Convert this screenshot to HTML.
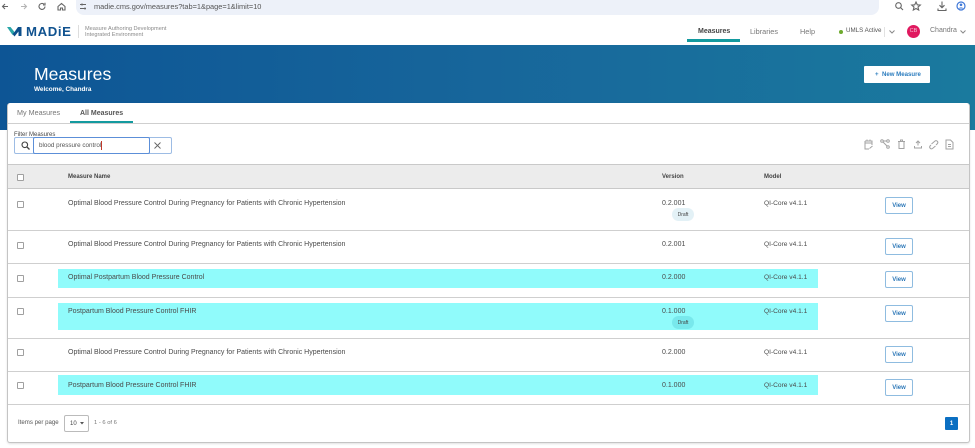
<!DOCTYPE html>
<html><head><meta charset="utf-8">
<style>
html,body{margin:0;padding:0;width:975px;height:448px;overflow:hidden;background:#fff;font-family:"Liberation Sans",sans-serif;color:#444}
#w{left:0;top:0;width:975px;height:448px;filter:blur(.3px);overflow:hidden;background:#fff}
div,span,svg{position:absolute;box-sizing:border-box}
.t{white-space:nowrap;line-height:10px}
.line{left:8px;width:961px;height:1.500px;background:#cfcfcf}
.hl{left:58px;width:760px;background:#90fbfb}
.cb{left:17px;width:7px;height:7px;border:1px solid #a0a0a0;border-radius:1px;background:#fff}
.name{left:68px;font-size:7px;color:#4a4a4a}
.ver{left:662px;font-size:7px;color:#4a4a4a}
.mod{left:764px;font-size:6.600px;color:#4a4a4a}
.view{left:885px;width:28px;height:17px;border:1px solid #8fbce0;border-radius:2px;background:#fff;color:#2d78b8;font-size:6px;font-weight:bold;text-align:center;line-height:17px}
.draft{left:672px;width:22px;height:13px;border-radius:7px;font-size:5px;color:#444;text-align:center;line-height:14px}
.ic{stroke:#a2a2a2;fill:none;stroke-width:1}
.br{stroke:#666;fill:none;stroke-width:1.100}
</style></head><body><div id="w">

<!-- browser bar -->
<div style="left:76px;top:0;width:803px;height:15px;background:#edf1f9;border-radius:0 0 8px 8px"></div>
<svg style="left:0;top:0" width="90" height="15" viewBox="0 0 90 15">
<path class="br" d="M8 6.500H2.500M5 4L2.500 6.500L5 9"/>
<path d="M21 6.500H26.500M24 4L26.500 6.500L24 9" stroke="#b5b5b5" fill="none" stroke-width="1.100"/>
<path class="br" d="M45 6.500A3 3 0 1 1 44 4.200M45 2.800V5H43"/>
<path class="br" d="M58 6.500L61.500 3.500L65 6.500V10H62.500V8H60.500V10H58Z"/>
<path class="br" d="M80 4.500H86M80 8.500H86"/>
<circle cx="82" cy="4.500" r="1" fill="#666"/><circle cx="85" cy="8.500" r="1" fill="#666"/>
</svg>
<div class="t" style="left:94px;top:2px;font-size:7.400px;color:#555">madie.cms.gov/measures?tab=1&amp;page=1&amp;limit=10</div>
<svg style="left:890px;top:0" width="85" height="15" viewBox="0 0 85 15">
<circle cx="8.500" cy="5.500" r="2.800" class="br"/><path class="br" d="M10.500 7.500L13 10"/>
<path class="br" d="M26 2L27.300 4.800L30.300 5.100L28 7.100L28.700 10L26 8.500L23.300 10L24 7.100L21.700 5.100L24.700 4.800Z"/>
<path class="br" d="M52 1.500V7.500M49.500 5.200L52 7.700L54.500 5.200M48 8.500V10.500H56V8.500"/>
<circle cx="71" cy="6" r="4" fill="#fff" stroke="#3f78d8" stroke-width="1.200"/><circle cx="71" cy="4.800" r="1.300" fill="#3f78d8"/><path d="M68.500 8.500A3 2.500 0 0 1 73.500 8.500" fill="#3f78d8"/>
</svg>

<!-- app header -->
<svg style="left:7px;top:27px" width="15" height="10" viewBox="0 0 15 10">
<path d="M0 0H3.500L7.500 5L5.500 8Z" fill="#2aa6a8"/><path d="M7.500 5L11 0H14.500V9H11.500V4.500L7.500 9.500L5.500 7Z" fill="#0d4f8b"/>
</svg>
<div class="t" style="left:26px;top:26px;font-size:13.200px;line-height:12px;font-weight:bold;color:#10528f;letter-spacing:.6px">MADiE</div>
<div style="left:78px;top:25px;width:1px;height:13px;background:#ddd"></div>
<div class="t" style="left:85px;top:26px;font-size:5.600px;line-height:6px;color:#8a8a8a">Measure Authoring Development<br>Integrated Environment</div>

<div class="t" style="left:698px;top:27px;font-size:7px;font-weight:bold;color:#444">Measures</div>
<div style="left:687px;top:39px;width:53px;height:3px;background:#139a9f"></div>
<div class="t" style="left:750px;top:27px;font-size:7.300px;color:#777">Libraries</div>
<div class="t" style="left:800px;top:27px;font-size:7.300px;color:#777">Help</div>
<div style="left:839px;top:30px;width:4px;height:4px;border-radius:50%;background:#6eaa2e"></div>
<div class="t" style="left:846px;top:26px;font-size:6.200px;color:#555">UMLS Active</div>
<div style="left:884px;top:27px;width:1px;height:10px;background:#e2e2e2"></div>
<svg style="left:888px;top:29px" width="8" height="6"><path d="M1.500 1.500L4 4L6.500 1.500" stroke="#888" fill="none"/></svg>
<div style="left:907px;top:25px;width:13px;height:13px;border-radius:50%;background:#e0195f;color:#f5c0d5;font-size:5.500px;text-align:center;line-height:13px">CB</div>
<div class="t" style="left:930px;top:26px;font-size:7px;color:#777">Chandra</div>
<svg style="left:959px;top:29px" width="8" height="6"><path d="M1.500 1.500L4 4L6.500 1.500" stroke="#888" fill="none"/></svg>

<!-- banner -->
<div style="left:0;top:45px;width:975px;height:85px;background:linear-gradient(90deg,#0d5595 0%,#17669b 50%,#1a7a9e 100%)"></div>
<div class="t" style="left:34px;top:65px;font-size:17.600px;line-height:18px;color:#fff">Measures</div>
<div class="t" style="left:34px;top:85px;font-size:6.400px;font-weight:bold;color:#fff">Welcome, Chandra</div>
<div style="left:864px;top:66px;width:66px;height:17px;background:#fff;border-radius:1px"></div>
<div class="t" style="left:875px;top:70px;font-size:6.100px;font-weight:bold;color:#2b7cbe">+&nbsp;&nbsp;New Measure</div>

<!-- card -->
<div style="left:7px;top:103px;width:963px;height:340px;background:#fff;border:1px solid #c4c4c4;border-top:none;border-radius:3px;box-shadow:0 1px 2px rgba(0,0,0,.12)"></div>
<div class="t" style="left:17px;top:108px;font-size:7.200px;color:#777">My Measures</div>
<div class="t" style="left:80px;top:108.500px;font-size:7px;font-weight:bold;color:#555">All Measures</div>
<div style="left:70px;top:121px;width:63px;height:2.500px;background:#139a9f"></div>
<div style="left:8px;top:123px;width:961px;height:1px;background:#cfcfcf"></div>

<!-- filter -->
<div class="t" style="left:14px;top:130px;font-size:6px;color:#444">Filter Measures</div>
<div style="left:14px;top:137px;width:158px;height:17px;border:1px solid #9dbce4;border-radius:2px"></div>
<div style="left:33px;top:137px;width:117px;height:17px;border:1px solid #5c8fd8;border-radius:2px;background:#fff"></div>
<svg style="left:20px;top:140px" width="11" height="11" viewBox="0 0 11 11"><circle cx="4.800" cy="4.800" r="2.800" fill="none" stroke="#444" stroke-width="1.100"/><path d="M7 7L9.500 9.500" stroke="#444" stroke-width="1.300"/></svg>
<div class="t" style="left:39px;top:141px;font-size:6.300px;color:#555">blood pressure control</div>
<div style="left:101px;top:141px;width:1px;height:9px;background:#c0392b"></div>
<svg style="left:153px;top:141px" width="9" height="9" viewBox="0 0 9 9"><path d="M1.500 1.500L7.500 7.500M7.500 1.500L1.500 7.500" stroke="#666" stroke-width=".9"/></svg>

<!-- action icons -->
<svg style="left:862px;top:138px" width="94" height="13" viewBox="0 0 94 13">
<path class="ic" d="M3 3H10V7M3 3V11H7M3 5H10M5 1.500V3.500M8 1.500V3.500M7.500 10.500L10.500 8"/>
<circle class="ic" cx="20" cy="3" r="1.300"/><circle class="ic" cx="26" cy="3" r="1.300"/><circle class="ic" cx="26" cy="9" r="1.300"/><path class="ic" d="M21.300 3H24.700M21 4L25 8"/>
<path class="ic" d="M36 3.500H43M37 3.500V10.500H42V3.500M38.500 3.500V2H40.500V3.500"/>
<path class="ic" d="M56 7.500V3M54 5L56 3L58 5M52.500 8V10H59.500V8"/>
<path class="ic" d="M69.500 6L73 3A1.800 1.800 0 0 1 75.500 5.500L74 7M73.500 8L70.500 10.500A1.800 1.800 0 0 1 68 8L69 7"/>
<path class="ic" d="M84 2H88.500L91 4.500V11H84ZM86 6.500H89M86 8.500H89"/>
</svg>

<!-- table -->
<div style="left:8px;top:164px;width:961px;height:25px;background:#ececec;border-top:1px solid #c9c9c9;border-bottom:1px solid #c9c9c9"></div>
<div class="cb" style="top:174px"></div>
<div class="t" style="left:68px;top:172px;font-size:6px;font-weight:bold;color:#444">Measure Name</div>
<div class="t" style="left:662px;top:172px;font-size:6px;font-weight:bold;color:#444">Version</div>
<div class="t" style="left:764px;top:172px;font-size:6px;font-weight:bold;color:#444">Model</div>

<div class="hl" style="top:269px;height:19px"></div>
<div class="hl" style="top:303px;height:27px"></div>
<div class="hl" style="top:375px;height:20px"></div>

<div class="line" style="top:229.500px"></div>
<div class="line" style="top:262.500px"></div>
<div class="line" style="top:296.500px"></div>
<div class="line" style="top:337.500px"></div>
<div class="line" style="top:370.500px"></div>
<div class="line" style="top:403.500px"></div>

<!-- rows -->
<div class="cb" style="top:201px"></div>
<div class="t name" style="top:199px">Optimal Blood Pressure Control During Pregnancy for Patients with Chronic Hypertension</div>
<div class="t ver" style="top:199px">0.2.001</div>
<div class="draft" style="top:208px;background:#e3f1f6">Draft</div>
<div class="t mod" style="top:199px">QI-Core v4.1.1</div>
<div class="view" style="top:197px">View</div>

<div class="cb" style="top:242px"></div>
<div class="t name" style="top:240px">Optimal Blood Pressure Control During Pregnancy for Patients with Chronic Hypertension</div>
<div class="t ver" style="top:240px">0.2.001</div>
<div class="t mod" style="top:240px">QI-Core v4.1.1</div>
<div class="view" style="top:238px">View</div>

<div class="cb" style="top:275px"></div>
<div class="t name" style="top:273px">Optimal Postpartum Blood Pressure Control</div>
<div class="t ver" style="top:273px">0.2.000</div>
<div class="t mod" style="top:273px">QI-Core v4.1.1</div>
<div class="view" style="top:271px">View</div>

<div class="cb" style="top:308px"></div>
<div class="t name" style="top:307px">Postpartum Blood Pressure Control FHIR</div>
<div class="t ver" style="top:307px">0.1.000</div>
<div class="draft" style="top:316px;background:#78e8ec">Draft</div>
<div class="t mod" style="top:307px">QI-Core v4.1.1</div>
<div class="view" style="top:305px">View</div>

<div class="cb" style="top:349px"></div>
<div class="t name" style="top:348px">Optimal Blood Pressure Control During Pregnancy for Patients with Chronic Hypertension</div>
<div class="t ver" style="top:348px">0.2.000</div>
<div class="t mod" style="top:348px">QI-Core v4.1.1</div>
<div class="view" style="top:346px">View</div>

<div class="cb" style="top:382px"></div>
<div class="t name" style="top:381px">Postpartum Blood Pressure Control FHIR</div>
<div class="t ver" style="top:381px">0.1.000</div>
<div class="t mod" style="top:381px">QI-Core v4.1.1</div>
<div class="view" style="top:379px">View</div>

<!-- footer -->
<div class="t" style="left:18px;top:418px;font-size:6.100px;color:#555">Items per page</div>
<div style="left:64px;top:415px;width:25px;height:17px;border:1px solid #bbb;border-radius:2px;background:#fff"></div>
<div class="t" style="left:70px;top:419px;font-size:6px;color:#444">10</div>
<svg style="left:79px;top:421px" width="6" height="5"><path d="M1 1H5L3 3.500Z" fill="#555"/></svg>
<div class="t" style="left:94px;top:418px;font-size:5.800px;color:#777">1 - 6 of 6</div>
<div style="left:945px;top:417px;width:13px;height:13px;background:#0b6fc2;border-radius:1px;color:#fff;font-size:6px;font-weight:bold;text-align:center;line-height:14px">1</div>
</div></body></html>
